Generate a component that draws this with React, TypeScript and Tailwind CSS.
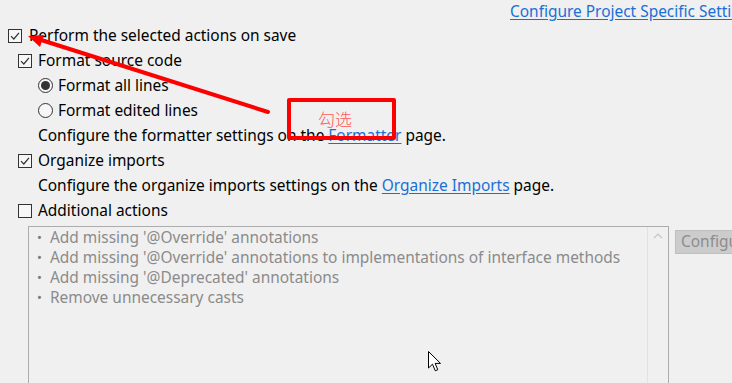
import React from "react";

const font = { fontFamily: '"Noto Sans", "Noto Sans CJK SC", sans-serif' };

const CheckBox = ({ checked }: { checked: boolean }) => (
  <span className="w-[14px] h-[14px] border border-[#333333] bg-[#f7f7f7] flex items-center justify-center shrink-0">
    {checked && (
      <svg width="10" height="10" viewBox="0 0 10 10">
        <path d="M1 5.2 L3.8 8 L9 1.8" fill="none" stroke="#333" strokeWidth="1.2" />
      </svg>
    )}
  </span>
);

const Radio = ({ checked }: { checked: boolean }) => (
  <span className="w-[15px] h-[15px] rounded-full border border-[#333333] bg-[#f7f7f7] flex items-center justify-center shrink-0">
    {checked && <span className="w-[9px] h-[9px] rounded-full bg-[#333333]" />}
  </span>
);

const Link = ({ children }: { children: React.ReactNode }) => (
  <span className="text-[#1a6fd6] underline underline-offset-2">{children}</span>
);

const actions = [
  "Add missing '@Override' annotations",
  "Add missing '@Override' annotations to implementations of interface methods",
  "Add missing '@Deprecated' annotations",
  "Remove unnecessary casts",
];

export default function App() {
  return (
    <div
      className="relative w-[732px] h-[383px] overflow-hidden bg-[#f0f0f0] text-[15.45px] text-black whitespace-nowrap"
      style={font}
    >
      {/* header link */}
      <div className="h-[23px] flex items-center pl-[510px]">
        <Link>Configure Project Specific Settings...</Link>
      </div>

      {/* options */}
      <div className="flex flex-col">
        <div className="h-[25px] flex items-center gap-[7px] pl-[8px]">
          <CheckBox checked />
          <span>Perform the selected actions on save</span>
        </div>
        <div className="h-[25px] flex items-center gap-[6px] pl-[18px]">
          <CheckBox checked />
          <span>Format source code</span>
        </div>
        <div className="h-[25px] flex items-center gap-[5px] pl-[38px]">
          <Radio checked />
          <span>Format all lines</span>
        </div>
        <div className="h-[25px] flex items-center gap-[5px] pl-[38px]">
          <Radio checked={false} />
          <span>Format edited lines</span>
        </div>
        <div className="h-[25px] flex items-center pl-[38px]">
          <span>
            Configure the formatter settings on the <Link>Formatter</Link> page.
          </span>
        </div>
        <div className="h-[25px] flex items-center gap-[6px] pl-[18px]">
          <CheckBox checked />
          <span>Organize imports</span>
        </div>
        <div className="h-[25px] flex items-center pl-[38px]">
          <span>
            Configure the organize imports settings on the <Link>Organize Imports</Link> page.
          </span>
        </div>
        <div className="h-[25px] flex items-center gap-[6px] pl-[18px]">
          <CheckBox checked={false} />
          <span>Additional actions</span>
        </div>
      </div>

      {/* list box + button */}
      <div className="flex items-start pl-[28px] mt-[3px] gap-[6px]">
        <div className="w-[641px] h-[170px] shrink-0 border border-[#adadad] flex">
          <ul className="flex-1 pt-[1px] text-[#8b8b8b]">
            {actions.map((a) => (
              <li key={a} className="h-[20px] flex items-center">
                <span className="w-[21px] text-center text-[13px] text-[#7a7a7a]">•</span>
                <span>{a}</span>
              </li>
            ))}
          </ul>
          <div className="w-[21px] border-l border-[#e2e2e2] flex justify-center pt-[6px]">
            <svg width="10" height="6" viewBox="0 0 10 6">
              <path d="M1 5 L5 1 L9 5" fill="none" stroke="#c4c4c4" strokeWidth="1.2" />
            </svg>
          </div>
        </div>
        <div className="mt-[4px] h-[24px] w-[100px] shrink-0 bg-[#cccccc] border border-[#bfbfbf] flex items-center pl-[5px] text-[#8c8c8c]">
          Configure...
        </div>
      </div>

      {/* annotations */}
      <svg className="absolute inset-0 pointer-events-none" width="732" height="383">
        <line x1="268" y1="112" x2="38" y2="39" stroke="#ff0000" strokeWidth="4" strokeLinecap="round" />
        <polygon points="28,36 44,35 40,47" fill="#ff0000" />
      </svg>
      <div className="absolute left-[287px] top-[98px] w-[109px] h-[42px] border-[4px] border-[#ff0000] rounded-[2px] flex items-center pl-[27px]">
        <span
          className="text-[#ff5a5a] text-[17px] font-light"
          style={{ fontFamily: '"Noto Sans CJK SC", sans-serif' }}
        >
          勾选
        </span>
      </div>

      {/* mouse cursor */}
      <svg className="absolute left-[428px] top-[351px]" width="16" height="24" viewBox="0 0 16 24">
        <path
          d="M0.5 0.5 L0.5 17 L4.5 13.2 L7.3 19.8 L9.8 18.7 L7.1 12.4 L12.5 12.4 Z"
          fill="#ffffff"
          stroke="#000000"
          strokeWidth="1"
        />
      </svg>
    </div>
  );
}
